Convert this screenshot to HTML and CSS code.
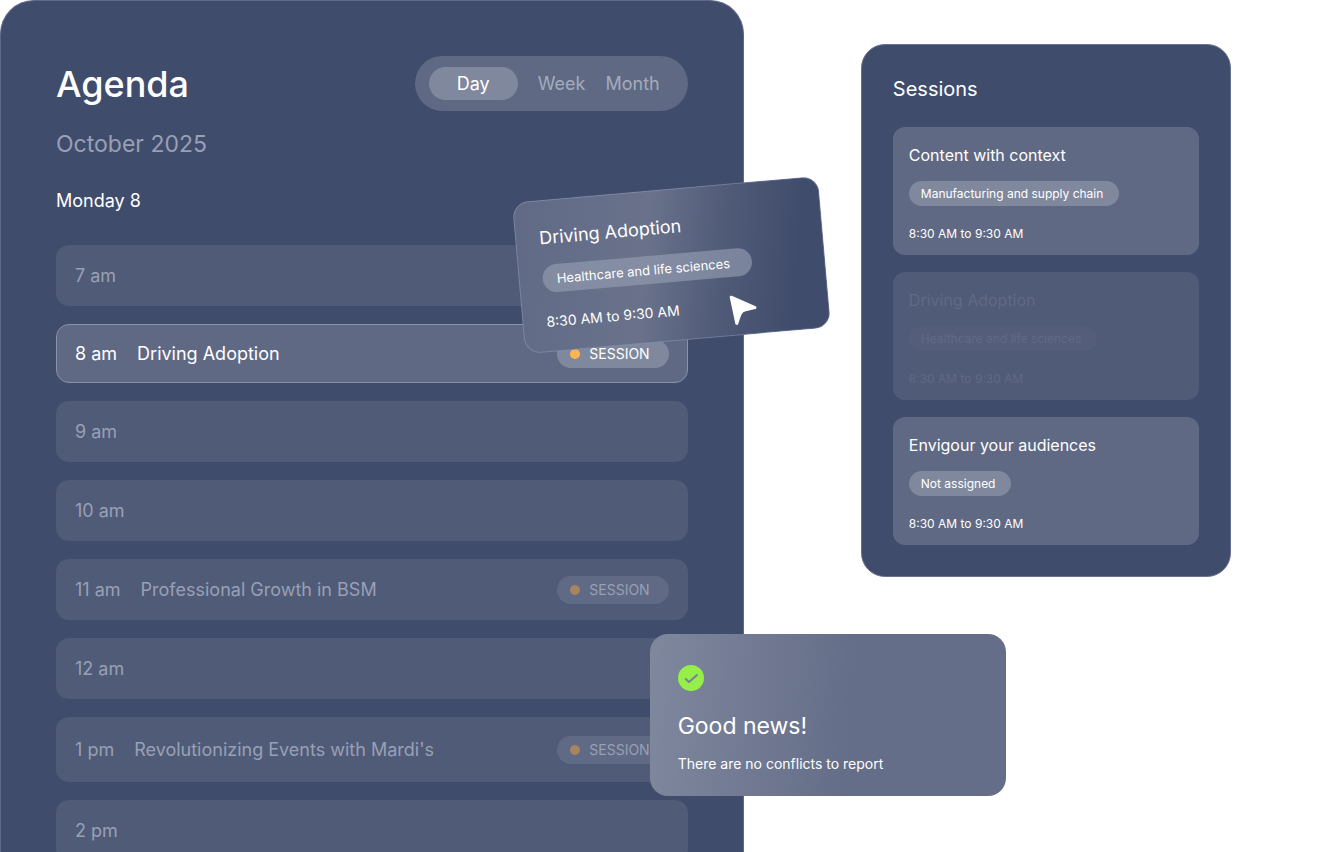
FILE: index.html
```html
<!DOCTYPE html>
<html lang="en">
<head>
<meta charset="UTF-8">
<meta name="viewport" content="width=device-width, initial-scale=1.0">
<title>Agenda</title>
<link rel="stylesheet" href="styles.css">
</head>
<body>

<main class="board">
    <section class="agenda">
        <header class="agenda-header">
            <h1>Agenda</h1>
            <div class="views">
                <button type="button" class="view active">Day</button>
                <button type="button" class="view">Week</button>
                <button type="button" class="view">Month</button>
            </div>
        </header>
        <p class="month">October 2025</p>
        <h2 class="day">Monday 8</h2>

        <ul class="hours">
            <li class="hour"><span>7 am</span></li>
            <li class="hour selected">
                <span>8 am</span>
                <span>Driving Adoption</span>
                <span class="badge">SESSION</span>
            </li>
            <li class="hour"><span>9 am</span></li>
            <li class="hour"><span>10 am</span></li>
            <li class="hour">
                <span>11 am</span>
                <span>Professional Growth in BSM</span>
                <span class="badge">SESSION</span>
            </li>
            <li class="hour"><span>12 am</span></li>
            <li class="hour tall">
                <span>1 pm</span>
                <span>Revolutionizing Events with Mardi's</span>
                <span class="badge">SESSION</span>
            </li>
            <li class="hour"><span>2 pm</span></li>
        </ul>

        <!-- card being dragged onto the 8 am slot -->
        <article class="dragged">
            <h3>Driving Adoption</h3>
            <span class="tag">Healthcare and life sciences</span>
            <p>8:30 AM to 9:30 AM</p>
        </article>
        <svg class="cursor" width="30" height="32" viewBox="0 0 30 32" aria-hidden="true">
            <path d="M3.2 3.2 L27 13.6 C22 15 17.5 15.4 14.5 17 C11.5 19 10.6 24.5 8.8 29.4 Z" fill="#fff" stroke="#fff" stroke-width="3" stroke-linejoin="round"/>
        </svg>

        <div class="notice" role="status">
            <svg width="26" height="26" viewBox="0 0 26 26" aria-hidden="true">
                <circle cx="13" cy="13" r="13" fill="#96ee49"/>
                <path d="M7.8 14 L11 17 L19 10" fill="none" stroke="#7a8199" stroke-width="2" stroke-linecap="round" stroke-linejoin="round"/>
            </svg>
            <h3>Good news!</h3>
            <p>There are no conflicts to report</p>
        </div>
    </section>

    <aside class="sessions">
        <h2>Sessions</h2>
        <article class="card">
            <h3>Content with context</h3>
            <span class="tag">Manufacturing and supply chain</span>
            <p>8:30 AM to 9:30 AM</p>
        </article>
        <article class="card taken">
            <h3>Driving Adoption</h3>
            <span class="tag">Healthcare and life sciences</span>
            <p>8:30 AM to 9:30 AM</p>
        </article>
        <article class="card">
            <h3>Envigour your audiences</h3>
            <span class="tag">Not assigned</span>
            <p>8:30 AM to 9:30 AM</p>
        </article>
    </aside>
</main>

</body>
</html>
```

FILE: styles.css
```css
* {
    box-sizing: border-box;
}
body {
    margin: 0;
    font-family: Inter, "Liberation Sans", sans-serif;
    color: #fff;
    background-color: #fff;
}
h1, h2, h3, p, ul {
    margin: 0;
    padding: 0;
    font-weight: 400;
}
.board {
    display: grid;
    grid-template-columns: 56% 1fr;
    height: 100vh;
    overflow: hidden;
}

/* Agenda */
.agenda {
    position: relative;
    padding: 55px 55px 0;
    border: 1px solid #5f6a87;
    border-bottom: none;
    border-radius: 34px 34px 0 0;
    background-color: #404c6b;
}
.agenda-header {
    display: flex;
    justify-content: space-between;
    align-items: center;
}
h1 {
    font-size: 36px;
    line-height: 48px;
    font-weight: 500;
}
.views {
    display: flex;
    gap: 20px;
    padding: 11px 28px 11px 14px;
    border-radius: 28px;
    background-color: #5f6983;
}
.view {
    padding: 0;
    border: none;
    background: none;
    font-family: inherit;
    font-size: 18px;
    line-height: 33px;
    color: #a4abbd;
    cursor: pointer;
}
.view.active {
    padding: 0 28px;
    border-radius: 17px;
    background-color: #80889d;
    color: #fff;
}
.month {
    margin-top: 18px;
    font-size: 23px;
    line-height: 30px;
    color: #98a0b5;
}
.day {
    margin: 30px 0 32px;
    font-size: 18px;
    line-height: 24px;
}
.hours {
    display: flex;
    flex-direction: column;
    gap: 18px;
    list-style: none;
}
.hour {
    display: flex;
    align-items: center;
    gap: 20px;
    height: 61px;
    padding: 0 19px;
    border-radius: 13px;
    background-color: #505b78;
    font-size: 18px;
    line-height: 24px;
    color: #98a0b5;
}
.hour.tall {
    height: 65px;
}
.hour.selected {
    height: 59px;
    padding: 0 18px;
    border: 1px solid #8a92a8;
    background-color: #606984;
    color: #fff;
}
.badge {
    display: flex;
    align-items: center;
    gap: 9px;
    margin-left: auto;
    padding: 0 19px 0 13px;
    border-radius: 14px;
    background-color: #606a84;
    font-size: 14px;
    line-height: 28px;
}
.badge::before {
    content: "";
    width: 10px;
    height: 10px;
    border-radius: 50%;
    background-color: #a8845f;
}
.selected .badge {
    background-color: #80889d;
}
.selected .badge::before {
    background-color: #ffb44f;
}

/* Cards */
.tag {
    display: inline-block;
    padding: 0 16px 0 12px;
    border-radius: 14px;
    background-color: #80889d;
    font-size: 12px;
    line-height: 25px;
}
.dragged {
    position: absolute;
    top: 188px;
    right: -82px;
    width: 307px;
    padding: 23px 23px 20px;
    border: 1px solid rgba(160, 172, 205, 0.4);
    border-radius: 16px;
    background: linear-gradient(100deg, #606a86 0%, #6a728b 42%, #505b78 65%, #404c6b 88%);
    background-origin: border-box;
    transform: rotate(-5deg);
}
.dragged h3 {
    font-size: 18px;
    line-height: 28px;
}
.dragged .tag {
    margin: 13px 0 20px;
    padding: 0 22px 0 14px;
    background-color: rgba(148, 156, 176, 0.65);
    font-size: 13px;
    line-height: 28px;
}
.dragged p {
    font-size: 14px;
    line-height: 18px;
}
.cursor {
    position: absolute;
    top: 293px;
    right: -15px;
}
.notice {
    position: absolute;
    top: 633px;
    right: -263px;
    width: 356px;
    padding: 31px 28px 23px;
    border-radius: 18px;
    background: linear-gradient(95deg, #80889e 0%, #747c95 25%, #656e88 55%, #656e88 100%);
}
.notice svg {
    display: block;
}
.notice h3 {
    margin: 20px 0 14px;
    font-size: 23px;
    line-height: 30px;
}
.notice p {
    font-size: 14px;
    line-height: 18px;
}

/* Sessions */
.sessions {
    justify-self: center;
    align-self: start;
    width: 370px;
    margin: 44px 0 0 20px;
    padding: 30px 31px 31px;
    border: 1px solid #69738f;
    border-radius: 24px;
    background-color: #404c6b;
}
.sessions h2 {
    margin-bottom: 24px;
    font-size: 20px;
    line-height: 28px;
}
.card {
    padding: 16px 16px 12px;
    border-radius: 12px;
    background-color: #606984;
}
.card + .card {
    margin-top: 17px;
}
.card h3 {
    font-size: 16px;
    line-height: 24px;
}
.card .tag {
    margin: 14px 0 19px;
    vertical-align: top;
}
.card p {
    font-size: 12px;
    line-height: 18px;
}
.card.taken {
    background-color: #505b78;
    color: #606a85;
}
.taken .tag {
    background-color: #545e7b;
}
```
